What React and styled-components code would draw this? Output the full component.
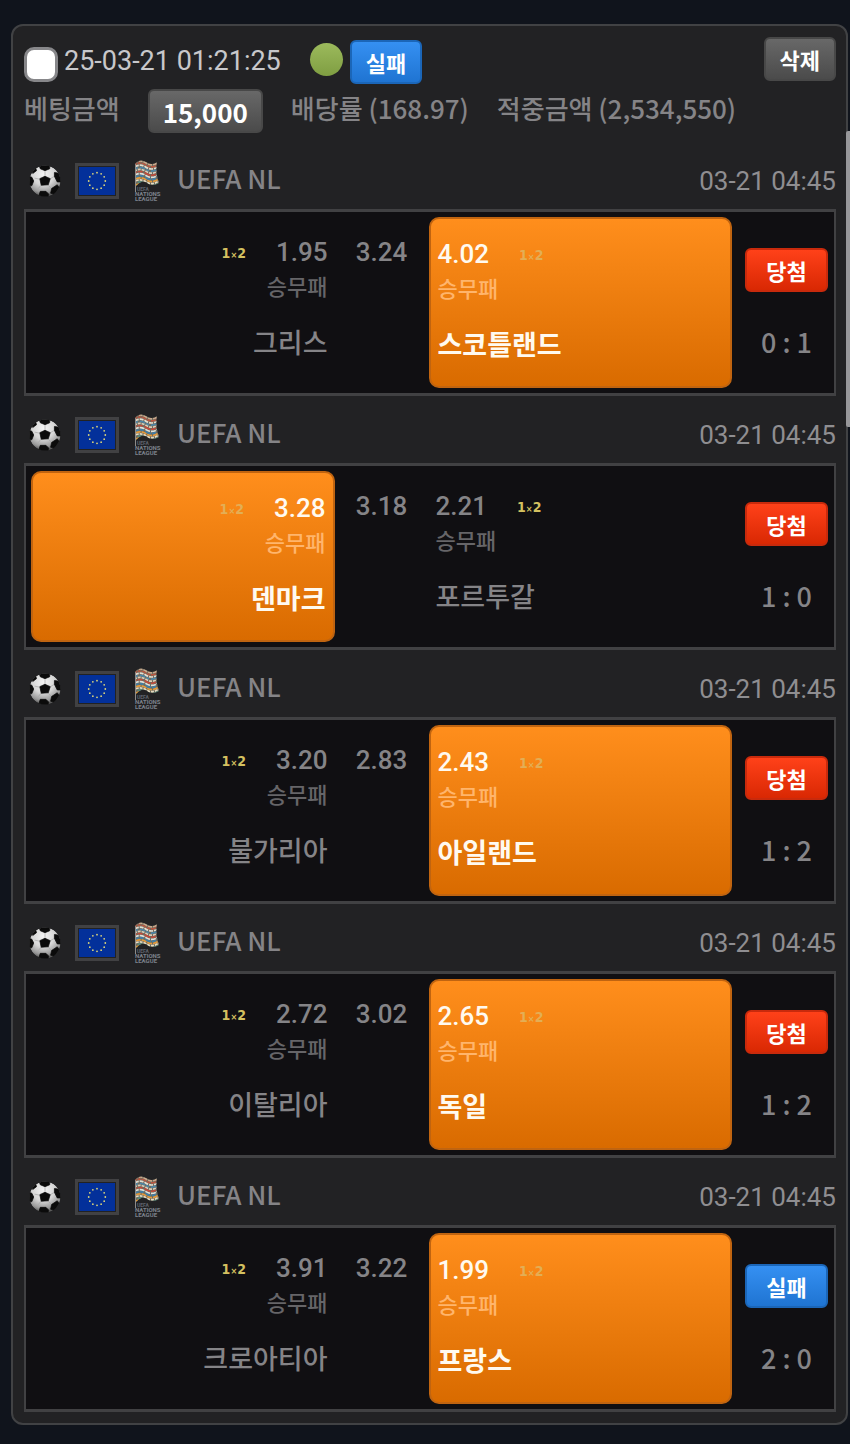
import { useId, useState } from 'react';
import styled, { createGlobalStyle, css } from 'styled-components';

const matches = [
   {
      home: { name: '그리스', odds: '1.95' },
      draw: '3.24',
      away: { name: '스코틀랜드', odds: '4.02' },
      pick: 'away',
      won: true,
      score: '0 : 1',
   },
   {
      home: { name: '덴마크', odds: '3.28' },
      draw: '3.18',
      away: { name: '포르투갈', odds: '2.21' },
      pick: 'home',
      won: true,
      score: '1 : 0',
   },
   {
      home: { name: '불가리아', odds: '3.20' },
      draw: '2.83',
      away: { name: '아일랜드', odds: '2.43' },
      pick: 'away',
      won: true,
      score: '1 : 2',
   },
   {
      home: { name: '이탈리아', odds: '2.72' },
      draw: '3.02',
      away: { name: '독일', odds: '2.65' },
      pick: 'away',
      won: true,
      score: '1 : 2',
   },
   {
      home: { name: '크로아티아', odds: '3.91' },
      draw: '3.22',
      away: { name: '프랑스', odds: '1.99' },
      pick: 'away',
      won: false,
      score: '2 : 0',
   },
];

const SoccerBall = () => {
   const id = useId();

   return (
      <svg width="32" height="34" viewBox="0 0 34 34" aria-hidden="true">
         <defs>
            <radialGradient id={`${id}shade`} cx="0.45" cy="0.28" r="0.78">
               <stop offset="0" stopColor="#f4f4f4" />
               <stop offset="0.45" stopColor="#d6d6d6" />
               <stop offset="0.75" stopColor="#9a9a9a" />
               <stop offset="1" stopColor="#2c2c2c" />
            </radialGradient>
            <clipPath id={`${id}clip`}>
               <circle cx="17" cy="17" r="16.5" />
            </clipPath>
         </defs>
         <g clipPath={`url(#${id}clip)`}>
            <circle cx="17" cy="17" r="16.5" fill={`url(#${id}shade)`} />
            <path
               d="M17 12 V6 M22 15 L27 12 M20 21 L24 25 M13 21 L10 25 M11 15 L6 14"
               stroke="#a4a4a4"
               strokeWidth="0.7"
               fill="none"
            />
            <g fill="#0b0b0b" stroke="#0b0b0b" strokeWidth="0.8" strokeLinejoin="round">
               <path d="M11.5 14.5 L17 12 L22.5 14.5 L20.5 21 L13 21.5 Z" />
               <path d="M11 1 L22 0 L22 4 L17 6 L12 4 Z" />
               <path d="M27 8 L34 9 L34 18 L30 18 L27 12 Z" />
               <path d="M24 25 L30 21 L32 24 L27 31 L23 30 Z" />
               <path d="M12 28 L18 28 L21 31 L20 34 L10 34 Z" />
               <path d="M0 12 L3 13 L5 17 L3 22 L0 22 Z" />
               <path d="M3 6 L7 3 L8 6 L4 9 Z" />
            </g>
         </g>
      </svg>
   );
};

const EuropeFlag = () => (
   <svg width="44" height="36" viewBox="0 0 44 36" aria-hidden="true">
      <rect x="1.5" y="1.5" width="41" height="33" fill="#222" stroke="#414143" strokeWidth="3" />
      <rect x="4" y="4" width="36" height="28" fill="#03309a" />
      {Array.from({ length: 12 }, (_, i) => {
         const angle = (i * Math.PI) / 6;
         return (
            <circle
               key={i}
               cx={22 + 8.3 * Math.sin(angle)}
               cy={18 - 8.3 * Math.cos(angle)}
               r="0.9"
               fill="#d9d27a"
            />
         );
      })}
   </svg>
);

const wave = (y) => `M0 ${y} Q6 ${y - 4} 12 ${y} T25 ${y - 1}`;

const NationsLeagueLogo = () => {
   const id = useId();
   const bands = [
      ['#c9a98c', '4 1'],
      ['#b9563f', '5 1 3 1'],
      ['#e4ddce', '4 1'],
      ['#4c86a8', '6 1 3 2'],
      ['#d9cdb8', '3 1'],
      ['#c24a3a', '5 2 6 1'],
      ['#dfe0d8', '5 1'],
      ['#3f7fa8', '6 1 4 2'],
      ['#e39a3c', '5 1'],
      ['#e3d9c0', '3 1'],
      ['#4f9183', '6 2'],
      ['#e09a30', '7 1'],
   ];

   return (
      <svg width="30" height="42" viewBox="-1 0 30 42" aria-hidden="true">
         <clipPath id={id}>
            <path d="M1 4 Q6 -2 12 2 T23 2 Q21 12 25 23 Q18 27 13 23 T1 27 Z" />
         </clipPath>
         <g clipPath={`url(#${id})`}>
            <rect width="26" height="28" fill="#6d6a5e" />
            {bands.map(([color, dash], i) => (
               <path
                  key={i}
                  d={wave(3 + i * 2.1)}
                  stroke={color}
                  strokeWidth="1.7"
                  strokeDasharray={dash}
                  strokeDashoffset={i * 2}
                  fill="none"
               />
            ))}
         </g>
         <path d="M1.5 4 V32" stroke="#8d8b88" strokeWidth="1" />
         <g fill="#7d828c" fontFamily="Roboto, sans-serif" fontWeight="700">
            <text x="3" y="31" fontSize="5" fill="#5f636c">UEFA</text>
            <text x="1" y="36" fontSize="6">NATIONS</text>
            <text x="1" y="41" fontSize="6">LEAGUE</text>
         </g>
      </svg>
   );
};

const TeamCell = ({ team, side, picked }) => (
   <Cell $side={side} $picked={picked}>
      <OddsLine $side={side}>
         <Odds>{team.odds}</Odds>
         <MarketTag $picked={picked}>
            1<small>×</small>2
         </MarketTag>
      </OddsLine>
      <Market $picked={picked}>승무패</Market>
      <TeamName $picked={picked}>{team.name}</TeamName>
   </Cell>
);

const Match = ({ match }) => (
   <article>
      <LeagueRow>
         <SoccerBall />
         <EuropeFlag />
         <NationsLeagueLogo />
         <LeagueName>UEFA NL</LeagueName>
         <KickOff>03-21 04:45</KickOff>
      </LeagueRow>
      <MatchBox>
         <TeamCell team={match.home} side="home" picked={match.pick === 'home'} />
         <DrawCell>{match.draw}</DrawCell>
         <TeamCell team={match.away} side="away" picked={match.pick === 'away'} />
         <ResultCell>
            <Badge $tone={match.won ? 'red' : 'blue'}>
               {match.won ? '당첨' : '실패'}
            </Badge>
            <Score>{match.score}</Score>
         </ResultCell>
      </MatchBox>
   </article>
);

const App = () => {
   const [checked, setChecked] = useState(false);

   return (
      <>
         <GlobalStyle />
         <BetSlip>
            <SlipHeader>
               <SlipLabel>
                  <CheckBox
                     type="checkbox"
                     checked={checked}
                     onChange={() => setChecked(!checked)}
                  />
                  <SlipDate>25-03-21 01:21:25</SlipDate>
               </SlipLabel>
               <StatusDot />
               <SlipStatus $tone="blue">실패</SlipStatus>
               <DeleteButton type="button">삭제</DeleteButton>
            </SlipHeader>
            <SlipSummary>
               <span>베팅금액</span>
               <Amount>15,000</Amount>
               <span>배당률 (168.97)</span>
               <span>적중금액 (2,534,550)</span>
            </SlipSummary>
            {matches.map((match) => (
               <Match key={match.home.name} match={match} />
            ))}
         </BetSlip>
         <ScrollThumb />
      </>
   );
};

const korean = "'Noto Sans CJK KR', sans-serif";

const tones = {
   blue: css`
      background: linear-gradient(#3590f2, #1f74d2);
      border-color: #1b66b8;
   `,
   red: css`
      background: linear-gradient(#ff4119, #d92803);
      border-color: #c92a0c;
   `,
   grey: css`
      background: linear-gradient(#686868, #4b4b4b);
      border-color: #484848;
   `,
};

const GlobalStyle = createGlobalStyle`
   * {
      box-sizing: border-box;
   }

   body {
      margin: 0;
      background: #10141c;
      color: #858487;
      font-family: Roboto, 'Noto Sans CJK KR', sans-serif;
      font-size: 26px;
      font-weight: 500;
   }
`;

const BetSlip = styled.main`
   margin: 24px 2px 20px 11px;
   padding: 11px 10px 11px 11px;
   background: #222224;
   border: 2px solid #414244;
   border-radius: 12px;
`;

const SlipHeader = styled.header`
   display: flex;
   align-items: center;
   height: 47px;
`;

const SlipLabel = styled.label`
   display: flex;
   align-items: center;
   gap: 6px;
   height: 100%;
`;

const CheckBox = styled.input`
   appearance: none;
   align-self: flex-end;
   width: 34px;
   height: 35px;
   margin: 0 0 2px;
   background: #fff;
   border: 3px solid #87878a;
   border-radius: 10px;

   &:checked {
      background: #3590f2;
   }
`;

const SlipDate = styled.time`
   color: #c8c8cb;
   font-size: 27px;
   font-weight: 400;
`;

const StatusDot = styled.span`
   width: 33px;
   height: 33px;
   margin: 0 7px 2px 29px;
   background: linear-gradient(#9cba5c, #7f9e42);
   border-radius: 50%;
`;

const Badge = styled.span`
   display: flex;
   align-items: center;
   justify-content: center;
   height: 44px;
   padding: 0 14px;
   border: 2px solid;
   border-radius: 6px;
   color: #fff;
   font-size: 22px;
   font-weight: 700;
   ${({ $tone }) => tones[$tone]}
`;

const SlipStatus = styled(Badge)`
   align-self: flex-end;
`;

const DeleteButton = styled.button`
   align-self: flex-start;
   height: 44px;
   margin-left: auto;
   padding: 0 14px;
   border: 2px solid;
   border-radius: 6px;
   color: #fff;
   font-family: inherit;
   font-size: 22px;
   font-weight: 700;
   ${tones.grey}
`;

const SlipSummary = styled.div`
   display: flex;
   align-items: flex-start;
   gap: 28px;
   margin: 5px 0 9px;
   font-family: ${korean};
   line-height: 38px;
`;

const Amount = styled.strong`
   height: 44px;
   padding: 2px 13px 0;
   border: 2px solid;
   border-radius: 6px;
   color: #fff;
   font-weight: 700;
   ${tones.grey}
`;

const LeagueRow = styled.header`
   display: flex;
   align-items: center;
   gap: 14px;
   height: 67px;
   padding: 10px 0 0 5px;
`;

const LeagueName = styled.h2`
   margin: 0 0 5px;
   font-family: ${korean};
   font-size: 26px;
   font-weight: inherit;
   line-height: 38px;
`;

const KickOff = styled.time`
   margin-left: auto;
   color: #8f8e91;
   font-weight: 400;
`;

const MatchBox = styled.div`
   display: grid;
   grid-template-columns: minmax(0, 1fr) 94px minmax(0, 1fr) 96px;
   padding: 5px 6px 5px 5px;
   background: #100f12;
   border: solid #414143;
   border-width: 3px 2px;
`;

const Cell = styled.div`
   display: flex;
   flex-direction: column;
   align-items: ${({ $side }) => ($side === 'home' ? 'flex-end' : 'flex-start')};
   height: 171px;
   padding: 18px 7px 0;
   border-radius: 10px;
   line-height: 35px;

   ${({ $picked }) =>
      $picked &&
      css`
         background: linear-gradient(#ff8e1c, #d96b00);
         border: 2px solid #c06410;
         color: #fffaf0;
      `}
`;

const OddsLine = styled.div`
   display: flex;
   flex-direction: ${({ $side }) => ($side === 'home' ? 'row-reverse' : 'row')};
   gap: 30px;
`;

const Odds = styled.span`
   font-size: 26px;
`;

const MarketTag = styled.span`
   padding-top: 2px;
   color: ${({ $picked }) => ($picked ? '#e3ae55' : '#d4c160')};
   font-family: 'DejaVu Sans Condensed', 'DejaVu Sans', sans-serif;
   font-size: 14px;
   font-weight: 700;
   line-height: 33px;

   small {
      font-size: 9px;
   }
`;

const Market = styled.span`
   color: ${({ $picked }) => ($picked ? '#ffb56c' : '#666568')};
   font-size: 22px;
   line-height: 31px;
`;

const TeamName = styled.strong`
   margin-top: 24px;
   font-size: 27px;
   font-weight: ${({ $picked }) => ($picked ? 700 : 500)};
`;

const DrawCell = styled.div`
   padding-top: 18px;
   line-height: 35px;
   text-align: center;
`;

const ResultCell = styled.div`
   display: flex;
   flex-direction: column;
   gap: 32px;
   padding: 31px 0 0 13px;
`;

const Score = styled.span`
   font-family: ${korean};
   font-size: 27px;
   line-height: 35px;
   text-align: center;
`;

const ScrollThumb = styled.div`
   position: fixed;
   top: 131px;
   right: 0;
   width: 4px;
   height: 296px;
   background: #97979a;
   border-radius: 2px 0 0 2px;
`;

export default App;
